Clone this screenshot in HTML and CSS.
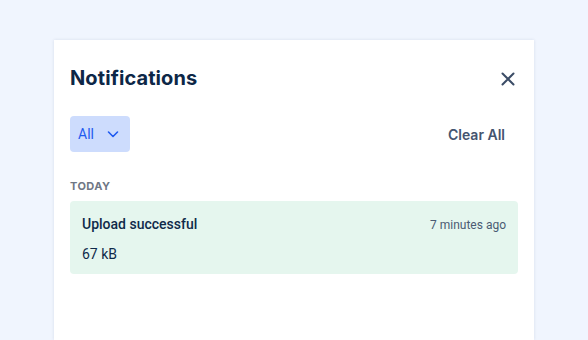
FILE: index.html
```html
<!DOCTYPE html>
<html>
	<head>
		<link rel="stylesheet" href="styles.css">
	</head>
	<body>
	<div class="panel">
		<div class="panel-head">
			<h2 class="title">Notifications</h2>
			<button class="close" aria-label="Close">
				<svg width="14" height="14" viewBox="0 0 14 14"><path d="M1.5 1.5 L12.5 12.5 M12.5 1.5 L1.5 12.5" stroke="#3b4c66" stroke-width="2" stroke-linecap="round" fill="none"/></svg>
			</button>
		</div>

		<div class="toolbar">
			<button class="filter">All
				<svg width="12" height="12" viewBox="0 0 12 12"><path d="M1.5 4 L6 8.5 L10.5 4" stroke="#1f5af0" stroke-width="1.6" stroke-linecap="round" stroke-linejoin="round" fill="none"/></svg>
			</button>
			<button class="clear">Clear All</button>
		</div>

		<p class="group">TODAY</p>

		<div class="note">
			<div class="note-top">
				<span class="note-title">Upload successful</span>
				<span class="note-time">7 minutes ago</span>
			</div>
			<div class="note-body">67 kB</div>
		</div>
	</div>
	</body>
</html>
```

FILE: styles.css
```css
body{
	margin: 0;
	background-color: #f0f5fe;
	font-family: Roboto, "Liberation Sans", sans-serif;
	color: #0f2a4a;
}
.panel{
	background-color: white;
	width: 480px;
	min-height: 300px;
	margin: 40px 0 0 54px;
	box-shadow: 0 0 3px rgba(30, 50, 90, 0.12);
	box-sizing: border-box;
	padding: 0 16px;
}
.panel-head{
	display: flex;
	justify-content: space-between;
	align-items: center;
	padding-top: 24px;
}
.title{
	margin: 0;
	font-family: Inter, "Liberation Sans", sans-serif;
	font-size: 20px;
	line-height: 28px;
	font-weight: 700;
	color: #0d2747;
	letter-spacing: 0.1px;
}
.close{
	background: none;
	border: none;
	padding: 0;
	margin: 1px 3px 0 0;
	width: 14px;
	height: 14px;
	display: flex;
	cursor: pointer;
}
.toolbar{
	display: flex;
	justify-content: space-between;
	align-items: center;
	margin-top: 24px;
}
.filter{
	display: flex;
	align-items: center;
	gap: 13px;
	height: 36px;
	width: 60px;
	padding: 0 0 0 8px;
	border: none;
	border-radius: 4px;
	background-color: #cddcfd;
	color: #1f5af0;
	font-family: Roboto, "Liberation Sans", sans-serif;
	font-size: 14px;
	cursor: pointer;
}
.clear{
	background: none;
	border: none;
	padding: 0;
	margin-right: 13px;
	font-family: Inter, "Liberation Sans", sans-serif;
	font-size: 14px;
	font-weight: 600;
	color: #44546f;
	cursor: pointer;
}
.group{
	margin: 26px 0 7px;
	font-family: Inter, "Liberation Sans", sans-serif;
	font-size: 11px;
	line-height: 16px;
	font-weight: 700;
	letter-spacing: 0.4px;
	color: #6f7785;
}
.note{
	background-color: #e5f6ee;
	border-radius: 4px;
	padding: 13px 12px 10px;
}
.note-top{
	display: flex;
	justify-content: space-between;
	align-items: baseline;
}
.note-title{
	font-size: 14px;
	line-height: 20px;
	font-weight: 500;
	color: #0f2a4a;
}
.note-time{
	font-size: 12px;
	line-height: 16px;
	color: #4b5b73;
}
.note-body{
	margin-top: 10px;
	font-size: 14px;
	line-height: 20px;
	color: #0f2a4a;
}
```
